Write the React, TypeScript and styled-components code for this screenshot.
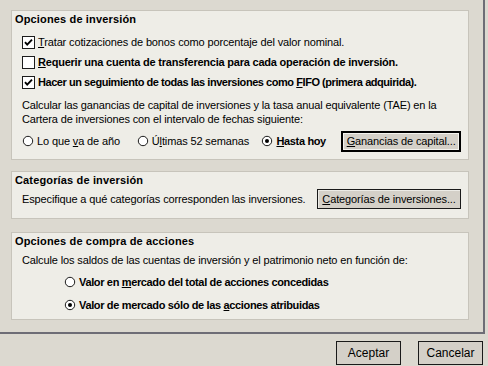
import React from "react";
import styled, { createGlobalStyle } from "styled-components";

const Global = createGlobalStyle`
  html, body { margin: 0; padding: 0; }
  body {
    width: 488px; height: 366px; overflow: hidden;
    background: #dcd9d0;
    font-family: "Liberation Sans", Arial, sans-serif;
    font-size: 11px;
    letter-spacing: -0.13px;
    color: #000;
  }
`;

const Window = styled.div`
  width: 488px;
  height: 366px;
  display: flex;
  flex-direction: column;
  background: #dcd9d0;
`;

const Content = styled.div`
  width: 472px;
  height: 322px;
  padding: 10px 0 0 11px;
  border-right: 2px solid #6e6d76;
  border-bottom: 2px solid #6e6d76;
  display: flex;
  flex-direction: column;
`;

const Panel = styled.section<{ $h: number; $mt: number }>`
  box-sizing: border-box;
  width: 458px;
  height: ${(p) => p.$h}px;
  margin-top: ${(p) => p.$mt}px;
  background: #eeede7;
  border: 1px solid #c7c4bb;
  padding: 1px 7px 0 3px;
  display: flex;
  flex-direction: column;
`;

const Title = styled.h2`
  margin: 0;
  font-size: 11px;
  font-weight: bold;
  letter-spacing: 0.15px;
  line-height: 14px;
  height: 14px;
`;

const Body = styled.div<{ $mt: number }>`
  margin-top: ${(p) => p.$mt}px;
  padding-left: 7px;
  display: flex;
  flex-direction: column;
`;

const CheckRow = styled.label<{ $bold?: boolean; $ls?: number }>`
  display: flex;
  align-items: center;
  height: 20px;
  gap: 3px;
  font-weight: ${(p) => (p.$bold ? "bold" : "normal")};
  letter-spacing: ${(p) => (p.$ls !== undefined ? `${p.$ls}px` : "inherit")};
  white-space: nowrap;
`;

const Para = styled.p<{ $mt: number }>`
  margin: ${(p) => p.$mt}px 0 0 0;
  line-height: 14px;
`;

const RadioRow = styled.div<{ $mt: number }>`
  display: flex;
  align-items: center;
  margin-top: ${(p) => p.$mt}px;
  height: 22px;
`;

const RadioItem = styled.label<{ $bold?: boolean; $w?: number }>`
  display: flex;
  align-items: center;
  gap: 3px;
  width: ${(p) => (p.$w ? `${p.$w}px` : "auto")};
  font-weight: ${(p) => (p.$bold ? "bold" : "normal")};
  letter-spacing: ${(p) => (p.$bold ? "-0.35px" : "inherit")};
  white-space: nowrap;
`;

const RadioCol = styled.div`
  display: flex;
  flex-direction: column;
  padding-left: 42px;
  margin-top: 4px;
`;

const RadioLine = styled.div`
  height: 22.5px;
  display: flex;
  align-items: center;
`;

const Button = styled.button<{ $default?: boolean; $w: number }>`
  box-sizing: border-box;
  width: ${(p) => p.$w}px;
  height: ${(p) => (p.$default ? 21 : 20)}px;
  background: #d4d0c8;
  border: ${(p) => (p.$default ? "2px solid #000" : "1px solid #1a1a1a")};
  box-shadow: ${(p) => (p.$default ? "inset 0 0 0 1px #f4f3ee" : "inset 1px 1px 0 #ecebe6")};
  font-family: "Liberation Sans", Arial, sans-serif;
  font-size: 11px;
  letter-spacing: -0.13px;
  color: #000;
  padding: 0;
  display: flex;
  align-items: center;
  justify-content: center;
`;

const Row = styled.div`
  display: flex;
  align-items: center;
  justify-content: space-between;
  height: 20px;
  margin-top: 1px;
`;

const Footer = styled.div`
  display: flex;
  justify-content: flex-end;
  gap: 17px;
  padding: 7px 5px 0 0;
`;

const FooterButton = styled.button`
  box-sizing: border-box;
  width: 65px;
  height: 24px;
  background: #d4d0c8;
  border: 1px solid #1a1a1a;
  font-family: "Liberation Sans", Arial, sans-serif;
  font-size: 12px;
  color: #000;
  padding: 0;
`;

const U = styled.span`
  text-decoration: underline;
  text-underline-offset: 1px;
`;

const Check = ({ on }: { on: boolean }) => (
  <svg width="13" height="13" viewBox="0 0 13 13" style={{ flex: "none" }}>
    <rect x="0.5" y="0.5" width="12" height="12" fill="#fff" stroke="#1c1c1c" />
    {on && (
      <path d="M3 6.2 L5.2 8.6 L10 3.6" fill="none" stroke="#000" strokeWidth="1.9" />
    )}
  </svg>
);

const Radio = ({ on }: { on: boolean }) => (
  <svg width="12" height="12" viewBox="0 0 12 12" style={{ flex: "none" }}>
    <circle cx="6" cy="6" r="4.7" fill="#fff" stroke="#1c1c1c" strokeWidth="1" />
    {on && <circle cx="6" cy="6" r="2" fill="#000" />}
  </svg>
);

export default function App() {
  return (
    <Window>
      <Global />
      <Content>
        <Panel $h={150} $mt={0}>
          <Title>Opciones de inversión</Title>
          <Body $mt={6}>
            <CheckRow>
              <Check on />
              <span>
                <U>T</U>ratar cotizaciones de bonos como porcentaje del valor nominal.
              </span>
            </CheckRow>
            <CheckRow $bold $ls={-0.22}>
              <Check on={false} />
              <span>
                <U>R</U>equerir una cuenta de transferencia para cada operación de inversión.
              </span>
            </CheckRow>
            <CheckRow $bold $ls={-0.45}>
              <Check on />
              <span>
                Hacer un seguimiento de todas las inversiones como <U>F</U>IFO (primera adquirida).
              </span>
            </CheckRow>
            <Para $mt={6}>
              Calcular las ganancias de capital de inversiones y la tasa anual equivalente (TAE) en la
              <br />
              Cartera de inversiones con el intervalo de fechas siguiente:
            </Para>
            <RadioRow $mt={4}>
              <RadioItem $w={115}>
                <Radio on={false} />
                <span>
                  Lo que <U>v</U>a de año
                </span>
              </RadioItem>
              <RadioItem $w={125}>
                <Radio on={false} />
                <span>
                  Ú<U>l</U>timas 52 semanas
                </span>
              </RadioItem>
              <RadioItem $bold $w={80}>
                <Radio on />
                <span>
                  <U>H</U>asta hoy
                </span>
              </RadioItem>
              <Button $default $w={120}>
                <span>
                  <U>G</U>anancias de capital...
                </span>
              </Button>
            </RadioRow>
          </Body>
        </Panel>

        <Panel $h={48} $mt={11}>
          <Title>Categorías de inversión</Title>
          <Body $mt={1}>
            <Row>
              <span>Especifique a qué categorías corresponden las inversiones.</span>
              <Button $w={144}>
                <span>
                  <U>C</U>ategorías de inversiones...
                </span>
              </Button>
            </Row>
          </Body>
        </Panel>

        <Panel $h={88} $mt={13}>
          <Title>Opciones de compra de acciones</Title>
          <Body $mt={5}>
            <Para $mt={0}>
              Calcule los saldos de las cuentas de inversión y el patrimonio neto en función de:
            </Para>
            <RadioCol>
              <RadioLine>
                <RadioItem $bold>
                  <Radio on={false} />
                  <span>
                    Valor en <U>m</U>ercado del total de acciones concedidas
                  </span>
                </RadioItem>
              </RadioLine>
              <RadioLine>
                <RadioItem $bold>
                  <Radio on />
                  <span>
                    Valor de mercado sólo de las <U>a</U>cciones atribuidas
                  </span>
                </RadioItem>
              </RadioLine>
            </RadioCol>
          </Body>
        </Panel>
      </Content>
      <Footer>
        <FooterButton>Aceptar</FooterButton>
        <FooterButton>Cancelar</FooterButton>
      </Footer>
    </Window>
  );
}
